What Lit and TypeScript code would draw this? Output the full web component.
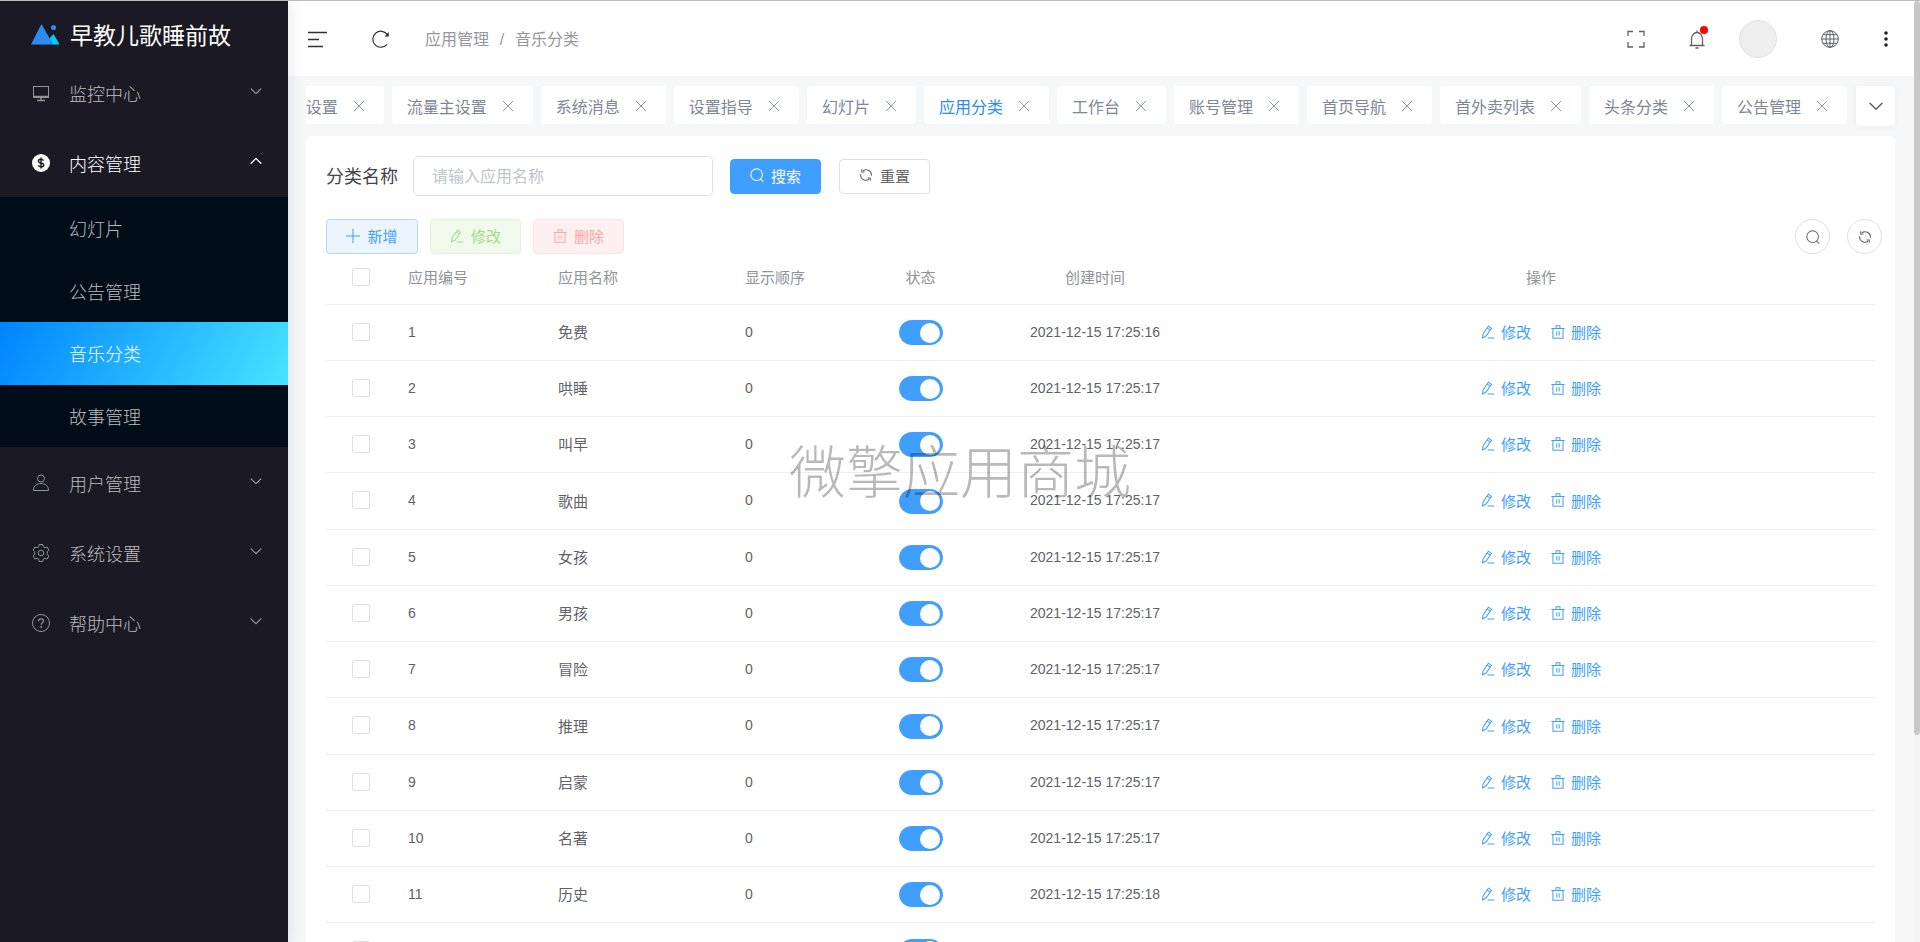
import { LitElement, html, css, svg, nothing } from "lit";
import { customElement, property, state } from "lit/decorators.js";
import { classMap } from "lit/directives/class-map.js";

const line = (d: string, w = 1) => svg`<path d=${d} fill="none" stroke="currentColor" stroke-width=${w} stroke-linejoin="round" stroke-linecap="round"></path>`;

const ICONS: Record<string, unknown> = {
  monitor: svg`<rect x="1.5" y="2.5" width="15" height="11" fill="none" stroke="currentColor"></rect><path d="M1.5 12.5h15M5 16.5h8M9 14v2" fill="none" stroke="currentColor" stroke-width="1.4"></path>`,
  coin: svg`<circle cx="9" cy="9" r="9" fill="currentColor"></circle><path d="M11.6 6.6C11 5.6 10 5.3 9 5.3c-1.500 0-2.600.7-2.600 1.900 0 2.600 5.300 1.100 5.300 3.700 0 1.200-1.200 1.900-2.700 1.900-1.200 0-2.200-.4-2.700-1.400M9 3.600v10.800" fill="none" stroke="#1b1a24" stroke-width="1.400"></path>`,
  user: svg`<circle cx="9" cy="4.500" r="3.500" fill="none" stroke="currentColor"></circle><path d="M1.500 16.500c0-5 3.500-7 7.500-7s7.500 2 7.500 7z" fill="none" stroke="currentColor"></path>`,
  gear: svg`<path d="M7.200.5h3.600l.5 2.300 1.500.9 2.300-.7 1.800 3.100-1.700 1.600v2.600l1.700 1.600-1.800 3.100-2.300-.7-1.500.9-.5 2.300H7.200l-.5-2.300-1.500-.9-2.300.7-1.800-3.100 1.700-1.600V7.700L1.100 6.100 2.900 3l2.300.7 1.500-.9z" fill="none" stroke="currentColor"></path><circle cx="9" cy="9" r="2.800" fill="none" stroke="currentColor"></circle>`,
  help: svg`<circle cx="9" cy="9" r="8.500" fill="none" stroke="currentColor"></circle><path d="M6.500 7.200c0-1.500 1.100-2.300 2.500-2.300s2.500.8 2.500 2.100c0 1.600-2.300 1.800-2.300 3.700" fill="none" stroke="currentColor" stroke-width="1.300"></path><circle cx="9.200" cy="13" r=".9" fill="currentColor"></circle>`,
  down: line("M3.500 6.500 9 12l5.500-5.500", 1.2),
  up: line("M3.500 11.500 9 6l5.500 5.500", 1.4),
  collapse: svg`<path d="M0 2.500h19M0 9.500h11M0 16.500h15" fill="none" stroke="currentColor" stroke-width="1.600"></path>`,
  reload: svg`<path d="M15.600 5A8 8 0 1 0 15 14.300" fill="none" stroke="currentColor" stroke-width="1.200"></path><path d="M16.800 2v4.500h-4.300z" fill="currentColor"></path>`,
  full: svg`<path d="M1 6V1.500h5M12 1.500h5V6M17 12v5h-5M6 17H1v-5" fill="none" stroke="currentColor" stroke-width="1.300"></path>`,
  bell: svg`<path d="M1.500 15.500h15M3.500 15.500V9c0-3.500 2.500-6.500 5.500-6.500s5.500 3 5.500 6.500v6.500M7.500 18h3M9 .5v2" fill="none" stroke="currentColor" stroke-width="1.300"></path>`,
  globe: svg`<circle cx="9" cy="9" r="8.300" fill="none" stroke="currentColor"></circle><ellipse cx="9" cy="9" rx="4" ry="8.300" fill="none" stroke="currentColor"></ellipse><path d="M9 .7v16.600M.7 9h16.600M2 4.700h14M2 13.300h14" fill="none" stroke="currentColor"></path>`,
  more: svg`<g fill="currentColor"><circle cx="9" cy="3" r="1.800"></circle><circle cx="9" cy="9" r="1.800"></circle><circle cx="9" cy="15" r="1.800"></circle></g>`,
  close: line("M3 3l12 12M15 3 3 15", 1.1),
  search: svg`<circle cx="8.500" cy="8.500" r="7.500" fill="none" stroke="currentColor" stroke-width="1.300"></circle><path d="M13.500 14l3.500 3.500" fill="none" stroke="currentColor" stroke-width="1.300"></path>`,
  refresh: svg`<path d="M5 3.500A7 7 0 0 1 16 9v1M13 14.500A7 7 0 0 1 2 9V8M3.500 1.500v3.500H7M14.500 16.500V13H11" fill="none" stroke="currentColor" stroke-width="1.300"></path>`,
  plus: svg`<path d="M9 0v18M0 9h18" fill="none" stroke="currentColor" stroke-width="1.300"></path>`,
  edit: svg`<path d="M2 16.500l.6-5L9.500 1.500l4 2.700-7 10zM8 4l3.800 2.700M8.500 16.800H17" fill="none" stroke="currentColor" stroke-width="1.300"></path>`,
  trash: svg`<path d="M.5 4.500h17M2.500 4.500v12.500h13V4.500M6.500 4V1h5v3M7.500 8v5.500M10.500 8v5.500" fill="none" stroke="currentColor" stroke-width="1.300"></path>`,
};

@customElement("ui-icon")
class UiIcon extends LitElement {
  @property() name = "";
  static styles = css`
    :host { display: inline-flex; width: 1em; height: 1em; flex: none; }
    svg { width: 100%; height: 100%; overflow: visible; }
  `;
  render() {
    return html`<svg viewBox="0 0 18 18" aria-hidden="true">${ICONS[this.name]}</svg>`;
  }
}

interface Menu { icon: string; label: string; children?: string[] }
const MENUS: Menu[] = [
  { icon: "monitor", label: "监控中心" },
  { icon: "coin", label: "内容管理", children: ["幻灯片", "公告管理", "音乐分类", "故事管理"] },
  { icon: "user", label: "用户管理" },
  { icon: "gear", label: "系统设置" },
  { icon: "help", label: "帮助中心" },
];

@customElement("side-menu")
class SideMenu extends LitElement {
  @state() private open = "内容管理";
  @state() private current = "音乐分类";
  static styles = css`
    :host { display: block; background: #1b1a24; color: #bbbbbf; font-size: 18px; font-weight: 300; box-shadow: 0 0 16px rgba(0, 21, 41, 0.12); }
    .brand { display: flex; align-items: center; gap: 10px; height: 56px; padding: 10px 31px 0; box-sizing: border-box; font-size: 23px; font-weight: 400; color: #fff; white-space: nowrap; }
    .logo { width: 29px; height: 22px; flex: none; }
    .item { display: flex; align-items: center; width: 100%; height: 70px; padding: 1px 24px 0 32px; border: 0; background: none; color: inherit; font: inherit; text-align: left; box-sizing: border-box; cursor: pointer; }
    .item > .lead { margin-right: 19px; color: #909399; }
    .item > .label { flex: 1; }
    .item > .arrow { font-size: 16px; margin-bottom: 4px; color: #a3a3a8; }
    .item.open, .item.open > ui-icon { color: #fff; }
    .sub { display: grid; grid-auto-rows: 1fr; height: 250px; background: #000c17; }
    .link { display: flex; align-items: center; padding-left: 69px; color: inherit; text-decoration: none; }
    .link.current { color: #fff; background: linear-gradient(118deg, #0084ff, #46e4ff); }
  `;
  render() {
    return html`
      <div class="brand">
        <svg class="logo" viewBox="0 0 29 22" aria-hidden="true">
          <path d="M10.500 1 22 21.500H0z" fill="#2d8cf0"></path>
          <path d="M22.500 11 28.500 21.500H22L18.500 15.500z" fill="#00cffd"></path>
          <circle cx="22.500" cy="4.500" r="2.500" fill="#2d8cf0"></circle>
        </svg>
        <span>早教儿歌睡前故</span>
      </div>
      <nav>
        ${MENUS.map((m) => {
          const open = m.label === this.open;
          return html`
            <button class=${classMap({ item: true, open })} aria-expanded=${open} @click=${() => (this.open = open ? "" : m.label)}>
              <ui-icon class="lead" name=${m.icon}></ui-icon>
              <span class="label">${m.label}</span>
              <ui-icon class="arrow" name=${open ? "up" : "down"}></ui-icon>
            </button>
            ${open && m.children
              ? html`<div class="sub">
                  ${m.children.map((c) => html`<a href="#" class=${classMap({ link: true, current: c === this.current })} @click=${() => (this.current = c)}>${c}</a>`)}
                </div>`
              : nothing}
          `;
        })}
      </nav>
    `;
  }
}

@customElement("top-bar")
class TopBar extends LitElement {
  static styles = css`
    :host { display: flex; align-items: center; height: 75px; padding: 0 19px 0 20px; box-sizing: border-box; background: #fff; color: #303133; font-size: 18px; }
    button { display: flex; position: relative; padding: 0; border: 0; background: none; color: inherit; font: inherit; cursor: pointer; }
    .crumbs { display: flex; align-items: baseline; margin-left: 35px; padding-bottom: 2px; font-size: 16px; color: #97989c; }
    .crumbs a { color: inherit; text-decoration: none; }
    .slash { width: 26px; text-align: center; }
    .left { display: flex; gap: 46px; }
    .right { display: flex; align-items: center; margin-left: auto; color: #5f6064; }
    .bell { margin-left: 43px; }
    .dot { position: absolute; top: -4px; right: -2px; width: 8px; height: 8px; border-radius: 50%; background: #f00; }
    .avatar { width: 38px; height: 38px; margin: 0 44px 0 33px; border-radius: 50%; background: #eee; box-sizing: border-box; border: 1px solid #e2e2e2; }
    .more { margin-left: 38px; color: #222; }
  `;
  render() {
    return html`
      <div class="left">
        <button aria-label="折叠菜单"><ui-icon name="collapse"></ui-icon></button>
        <button aria-label="刷新"><ui-icon name="reload"></ui-icon></button>
      </div>
      <nav class="crumbs"><a href="#">应用管理</a><span class="slash">/</span><span>音乐分类</span></nav>
      <div class="right">
        <button aria-label="全屏"><ui-icon name="full"></ui-icon></button>
        <button class="bell" aria-label="通知"><ui-icon name="bell"></ui-icon><span class="dot"></span></button>
        <button class="avatar" aria-label="用户"></button>
        <button aria-label="语言"><ui-icon name="globe"></ui-icon></button>
        <button class="more" aria-label="更多"><ui-icon name="more"></ui-icon></button>
      </div>
    `;
  }
}

const TABS = ["动态设置", "流量主设置", "系统消息", "设置指导", "幻灯片", "应用分类", "工作台", "账号管理", "首页导航", "首外卖列表", "头条分类", "公告管理"];

@customElement("page-tabs")
class PageTabs extends LitElement {
  @state() private current = "应用分类";
  static styles = css`
    :host { display: flex; align-items: flex-start; gap: 9px; color: #808695; font-size: 16px; }
    .strip { display: flex; flex: 1; min-width: 0; justify-content: flex-end; gap: 8px; overflow: hidden; }
    .tab { display: flex; flex: none; align-items: center; height: 38px; padding: 2px 18px 0 15px; box-sizing: border-box; border-radius: 4px; background: #fff; }
    button { display: flex; align-items: center; padding: 0; border: 0; background: none; color: inherit; font: inherit; white-space: nowrap; cursor: pointer; }
    .tab.current .name { color: #2d8cf0; }
    .x { margin-left: 14px; font-size: 14px; }
    .more { justify-content: center; width: 39px; height: 40px; border-radius: 4px; background: #fff; color: #515a6e; font-size: 20px; box-shadow: 0 0 6px rgba(0, 0, 0, 0.05); }
  `;
  render() {
    return html`
      <div class="strip">
        ${TABS.map((t) => html`
          <div class=${classMap({ tab: true, current: t === this.current })}>
            <button class="name" @click=${() => (this.current = t)}>${t}</button>
            <button class="x" aria-label="关闭"><ui-icon name="close"></ui-icon></button>
          </div>`)}
      </div>
      <button class="more" aria-label="更多标签"><ui-icon name="down"></ui-icon></button>
    `;
  }
}

const NAMES = ["免费", "哄睡", "叫早", "歌曲", "女孩", "男孩", "冒险", "推理", "启蒙", "名著", "历史", "科普"];
const ROWS = NAMES.map((name, i) => ({
  id: i + 1,
  name,
  order: 0,
  time: `2021-12-15 17:25:${i === 0 ? 16 : i < 10 ? 17 : 18}`,
}));

@customElement("category-table")
class CategoryTable extends LitElement {
  static styles = css`
    :host { display: block; }
    table { width: 100%; table-layout: fixed; border-collapse: separate; border-spacing: 0; font-size: 15px; color: #606266; }
    .c-check { width: 70px; }
    .c-id { width: 150px; }
    .c-name { width: 187px; }
    .c-order, .c-state { width: 125px; }
    .c-time { width: 224px; }
    th, td { height: 56px; padding: 0 12px 2px; border-bottom: 1px solid #ebeef5; box-sizing: border-box; text-align: left; font-weight: inherit; }
    th { height: 51px; padding-bottom: 5px; color: #909399; }
    td.state { padding-bottom: 0; }
    tr:nth-child(4n) td { height: 57px; }
    .mid { text-align: center; }
    .num { font-size: 14px; }
    input { display: block; appearance: none; margin: 0 auto; border: 1px solid #dcdfe6; background: #fff; cursor: pointer; }
    .tick { width: 18px; height: 18px; border-radius: 2px; }
    .tick:checked { background: #409eff; border-color: #409eff; }
    .switch { display: flex; align-items: center; width: 44px; height: 25px; padding: 0 2px; border-radius: 13px; box-sizing: border-box; }
    .switch::before { content: ""; width: 20px; height: 20px; border-radius: 50%; background: #fff; }
    .switch:checked { justify-content: flex-end; border-color: #409eff; background: #409eff; }
    .ops { display: flex; justify-content: center; gap: 20px; }
    .op { display: flex; align-items: center; gap: 6px; padding: 0; border: 0; background: none; color: #409eff; font: inherit; cursor: pointer; }
    .op ui-icon { font-size: 14px; }
  `;
  render() {
    return html`
      <table>
        <colgroup>
          <col class="c-check" /><col class="c-id" /><col class="c-name" /><col class="c-order" /><col class="c-state" /><col class="c-time" /><col />
        </colgroup>
        <thead>
          <tr>
            <th><input class="tick" type="checkbox" aria-label="全选" /></th>
            <th>应用编号</th>
            <th>应用名称</th>
            <th>显示顺序</th>
            <th class="mid">状态</th>
            <th class="mid">创建时间</th>
            <th class="mid">操作</th>
          </tr>
        </thead>
        <tbody>
          ${ROWS.map((r) => html`
            <tr>
              <td><input class="tick" type="checkbox" aria-label="选择${r.name}" /></td>
              <td class="num">${r.id}</td>
              <td>${r.name}</td>
              <td class="num">${r.order}</td>
              <td class="state"><input class="switch" type="checkbox" role="switch" aria-label="${r.name}状态" checked /></td>
              <td class="mid num">${r.time}</td>
              <td>
                <div class="ops">
                  <button class="op"><ui-icon name="edit"></ui-icon>修改</button>
                  <button class="op"><ui-icon name="trash"></ui-icon>删除</button>
                </div>
              </td>
            </tr>`)}
        </tbody>
      </table>
    `;
  }
}

@customElement("app-root")
class AppRoot extends LitElement {
  static styles = css`
    :host { display: block; position: relative; height: 100vh; overflow: hidden; box-sizing: border-box; border-top: 1px solid #bbb; background: #f5f7f9; font-family: "Liberation Sans", "Noto Sans CJK SC", sans-serif; }
    .shell { display: grid; grid-template-columns: 288px minmax(0, 1fr) 6px; height: 100%; }
    side-menu { position: relative; z-index: 1; }
    main { min-width: 0; overflow: hidden; }
    .body { padding: 10px 19px 0 18px; }
    .card { margin-top: 10px; padding: 20px; border-radius: 5px; background: #fff; }
    .filter { display: flex; align-items: center; }
    .filter label { padding-bottom: 2px; font-size: 18px; color: #444; }
    .filter input { width: 300px; height: 40px; margin: 0 17px 0 15px; padding: 2px 18px 0; border: 1px solid #dcdfe6; border-radius: 5px; box-sizing: border-box; font: inherit; font-size: 16px; outline: 0; }
    .filter input::placeholder { color: #c0c4cc; opacity: 1; }
    .btn { display: flex; align-items: center; justify-content: center; gap: 7px; width: 91px; height: 35px; padding: 0 0 2px; border: 1px solid #dcdfe6; border-radius: 4px; box-sizing: border-box; background: #fff; color: #606266; font: inherit; font-size: 15px; cursor: pointer; }
    .btn ui-icon { font-size: 14px; }
    .btn.primary { border-color: #409eff; background: #409eff; color: #fff; margin-right: 18px; }
    .btn.add { width: 92px; border-color: #b3d8ff; background: #ecf5ff; color: #409eff; }
    .btn.edit { border-color: #e1f3d8; background: #f0f9eb; color: #a4da89; }
    .btn.del { border-color: #fde2e2; background: #fef0f0; color: #f9a7a7; }
    .tools { display: flex; align-items: center; gap: 12px; margin: 23px -7px 0 0; }
    .btn.round { width: 35px; padding: 0; border-radius: 50%; }
    .round.first { margin-left: auto; margin-right: 5px; }
    .bar { background: #f5f5f5; }
    .thumb { height: 78%; border-radius: 3px; background: #c8c8c8; }
    .mark { position: absolute; inset: 0; z-index: 2; display: flex; align-items: center; justify-content: center; padding-bottom: 8px; color: rgba(0, 0, 0, 0.28); font-size: 57px; font-weight: 300; white-space: nowrap; pointer-events: none; }
  `;
  render() {
    return html`
      <div class="shell">
        <side-menu></side-menu>
        <main>
          <top-bar></top-bar>
          <div class="body">
            <page-tabs></page-tabs>
            <section class="card">
              <form class="filter" @submit=${(e: Event) => e.preventDefault()}>
                <label for="name">分类名称</label>
                <input id="name" type="text" placeholder="请输入应用名称" />
                <button class="btn primary"><ui-icon name="search"></ui-icon>搜索</button>
                <button class="btn" type="reset"><ui-icon name="refresh"></ui-icon>重置</button>
              </form>
              <div class="tools">
                <button class="btn add"><ui-icon name="plus"></ui-icon>新增</button>
                <button class="btn edit" disabled><ui-icon name="edit"></ui-icon>修改</button>
                <button class="btn del" disabled><ui-icon name="trash"></ui-icon>删除</button>
                <button class="btn round first" aria-label="显示搜索"><ui-icon name="search"></ui-icon></button>
                <button class="btn round" aria-label="刷新列表"><ui-icon name="refresh"></ui-icon></button>
              </div>
              <category-table></category-table>
            </section>
          </div>
        </main>
        <div class="bar"><div class="thumb"></div></div>
      </div>
      <div class="mark">微擎应用商城</div>
    `;
  }
}
